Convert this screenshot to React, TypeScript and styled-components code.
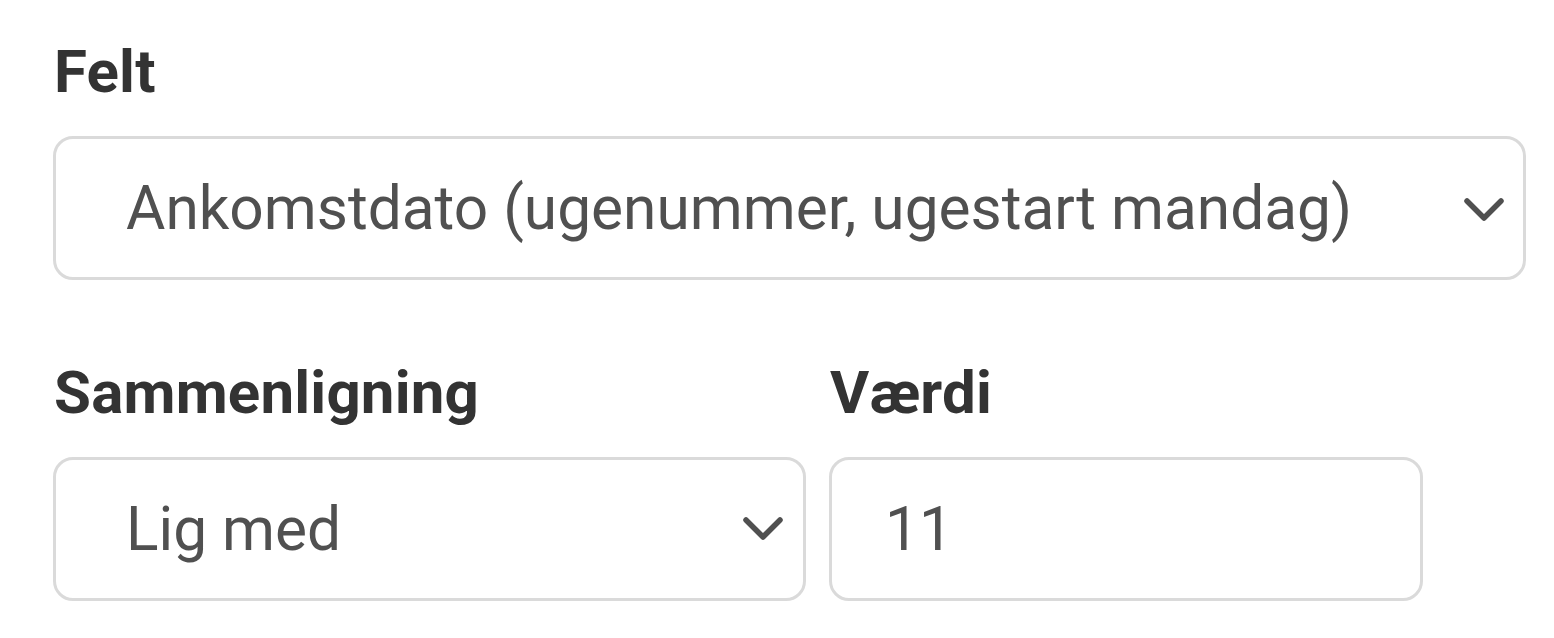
import React from "react";
import styled, { createGlobalStyle } from "styled-components";

const Global = createGlobalStyle`
  html, body { margin: 0; padding: 0; background: #fff; }
  body { font-family: Roboto, "Noto Sans", Arial, sans-serif; }
`;

const Form = styled.div`
  display: flex;
  flex-direction: column;
  padding: 38px 28px 0 53px;
  width: 1473px;
`;

const Field = styled.div<{ $width?: number }>`
  display: flex;
  flex-direction: column;
  width: ${(p) => (p.$width ? `${p.$width}px` : "100%")};
`;

const Label = styled.label`
  font-size: 60px;
  font-weight: 700;
  color: #333;
  line-height: 67px;
  padding-left: 1px;
  margin-bottom: 31px;
  letter-spacing: 0.2px;
`;

const Row = styled.div`
  display: flex;
  gap: 23px;
  margin-top: 79px;
`;

const SelectWrap = styled.div`
  position: relative;
  width: 100%;
`;

const boxStyle = `
  box-sizing: border-box;
  width: 100%;
  height: 144px;
  border: 3px solid #dadada;
  border-radius: 20px;
  background: #fff;
  font-family: Roboto, "Noto Sans", Arial, sans-serif;
  font-size: 60.4px;
  color: #505050;
  padding: 0 70px 0 70px;
  outline: none;
  margin: 0;
`;

const Select = styled.select`
  ${boxStyle}
  appearance: none;
  -webkit-appearance: none;
`;

const Input = styled.input`
  ${boxStyle}
  padding-left: 53px;
`;

const Chevron = styled.svg<{ $right: number; $shift: number }>`
  position: absolute;
  right: ${(p) => p.$right}px;
  top: calc(50% + ${(p) => p.$shift}px);
  transform: translateY(-50%);
  width: 42px;
  height: 28px;
  pointer-events: none;
`;

const ChevronIcon = ({ right, shift }: { right: number; shift: number }) => (
  <Chevron $right={right} $shift={shift} viewBox="0 0 42 28">
    <path d="M4 5 L21 22 L38 5" fill="none" stroke="#505050" strokeWidth="5.5" strokeLinecap="round" strokeLinejoin="round" />
  </Chevron>
);

export default function App() {
  return (
    <>
      <Global />
      <Form>
        <Field>
          <Label>Felt</Label>
          <SelectWrap>
            <Select defaultValue="a">
              <option value="a">Ankomstdato (ugenummer, ugestart mandag)</option>
            </Select>
            <ChevronIcon right={21} shift={2} />
          </SelectWrap>
        </Field>
        <Row>
          <Field $width={753}>
            <Label>Sammenligning</Label>
            <SelectWrap>
              <Select defaultValue="eq">
                <option value="eq">Lig med</option>
              </Select>
              <ChevronIcon right={22} shift={0} />
            </SelectWrap>
          </Field>
          <Field $width={594}>
            <Label>Værdi</Label>
            <Input defaultValue="11" />
          </Field>
        </Row>
      </Form>
    </>
  );
}
